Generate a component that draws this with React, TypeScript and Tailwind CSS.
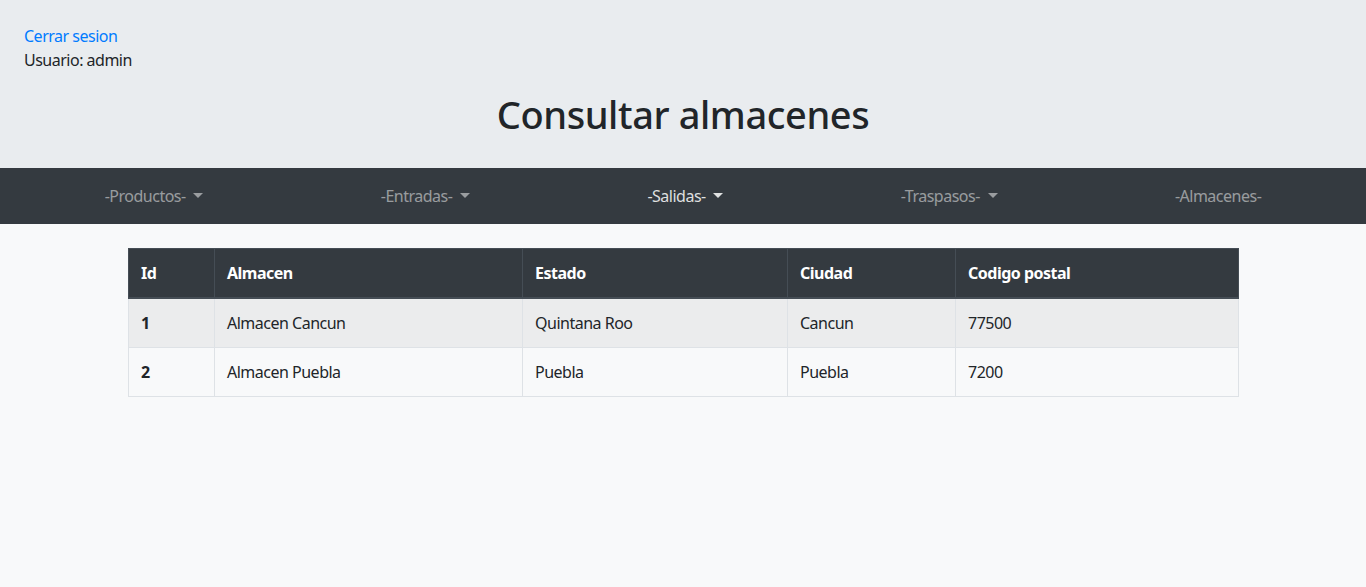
import React from "react";

const font = { fontFamily: '"Noto Sans", "Open Sans", sans-serif' };

function Caret() {
  return (
    <span className="inline-block ml-[4px] align-[4px] w-0 h-0 border-t-[5px] border-t-current border-x-[5px] border-x-transparent" />
  );
}

export default function App() {
  const items = [
    { label: "-Productos-", caret: true, active: false },
    { label: "-Entradas-", caret: true, active: false },
    { label: "-Salidas-", caret: true, active: true },
    { label: "-Traspasos-", caret: true, active: false },
    { label: "-Almacenes-", caret: false, active: false },
  ];
  const rows = [
    ["1", "Almacen Cancun", "Quintana Roo", "Cancun", "77500"],
    ["2", "Almacen Puebla", "Puebla", "Puebla", "7200"],
  ];
  const widths = ["w-[86px]", "w-[308px]", "w-[265px]", "w-[168px]", "w-[283px]"];
  return (
    <div className="min-h-[587px] bg-[#f8f9fa] text-[#212529] text-[16px] leading-[24px] tracking-[-0.5px]" style={font}>
      <div className="bg-[#e9ecef] pt-6 px-6 pb-[30px]">
        <a href="#" className="block text-[#007bff] w-fit">Cerrar sesion</a>
        <div>Usuario: admin</div>
        <h1 className="mt-[18px] text-center text-[38px] leading-[48px] font-medium tracking-[-0.4px]">Consultar almacenes</h1>
      </div>
      <nav className="bg-[#343a40] h-[56px] px-4 flex items-center justify-around">
        {items.map((it) => (
          <a
            key={it.label}
            href="#"
            className={`px-2 py-2 whitespace-pre ${it.active ? "text-[rgba(255,255,255,0.85)]" : "text-[rgba(255,255,255,0.5)]"}`}
          >
            {it.caret ? it.label + " " : it.label}
            {it.caret && <Caret />}
          </a>
        ))}
      </nav>
      <div className="w-[1110px] mx-auto mt-6">
        <table className="w-full border-collapse border border-[#dee2e6] table-fixed">
          <thead>
            <tr className="bg-[#343a40] text-white">
              {["Id", "Almacen", "Estado", "Ciudad", "Codigo postal"].map((h, i) => (
                <th
                  key={h}
                  className={`${widths[i]} text-left font-bold px-3 py-3 border border-[#454d55] border-b-2 border-b-[#454d55]`}
                >
                  {h}
                </th>
              ))}
            </tr>
          </thead>
          <tbody>
            {rows.map((r, ri) => (
              <tr key={ri} className={ri % 2 === 0 ? "bg-[#ebeced]" : "bg-[#f8f9fa]"}>
                {r.map((c, ci) => (
                  <td key={ci} className={`px-3 py-3 border border-[#dee2e6] ${ci === 0 ? "font-bold" : ""}`}>
                    {c}
                  </td>
                ))}
              </tr>
            ))}
          </tbody>
        </table>
      </div>
    </div>
  );
}
